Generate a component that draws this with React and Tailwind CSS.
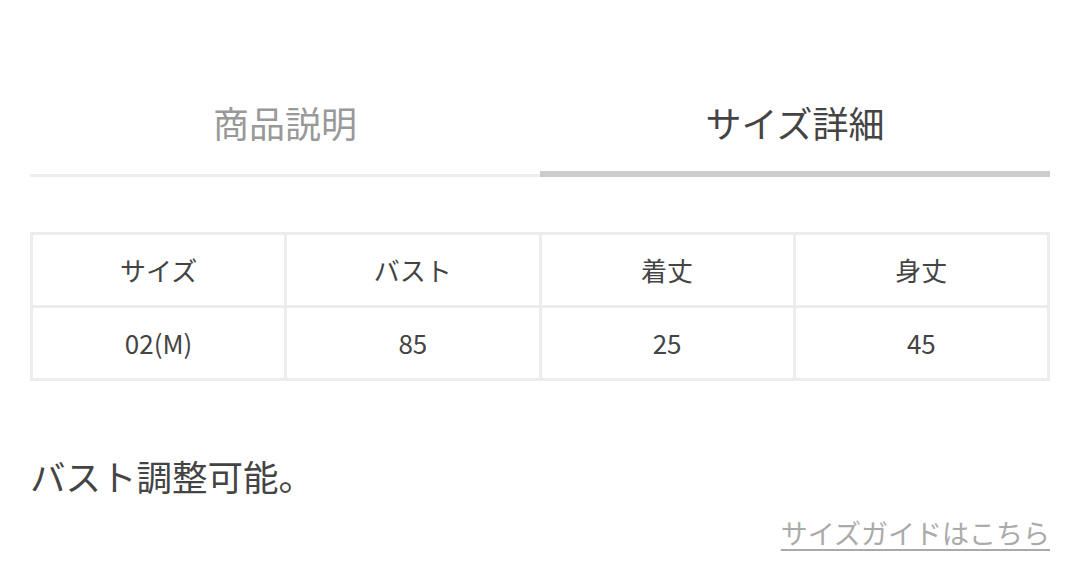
import React from 'react';

const rows = [
  ['サイズ', 'バスト', '着丈', '身丈'],
  ['02(M)', '85', '25', '45'],
];

export default function App() {
  return (
    <div
      className="w-[1080px] h-[585px] bg-white px-[30px] pt-[98px] text-[#444]"
      style={{ fontFamily: '"Noto Sans CJK JP", "Noto Sans", sans-serif' }}
    >
      {/* タブ */}
      <div className="flex">
        <div className="flex-1 flex flex-col">
          <div className="h-[48px] flex items-center justify-center text-[36px] text-[#999] leading-none">商品説明</div>
          <div className="mt-[28px] h-[3px] bg-[#eeeeee]" />
        </div>
        <div className="flex-1 flex flex-col">
          <div className="h-[48px] flex items-center justify-center text-[36px] text-[#444] leading-none">サイズ詳細</div>
          <div className="mt-[25px] h-[6px] bg-[#cccccc]" />
        </div>
      </div>

      {/* サイズ表 */}
      <table className="mt-[55px] w-full table-fixed border-collapse">
        <tbody>
          {rows.map((r, i) => (
            <tr key={i}>
              {r.map((c, j) => (
                <td
                  key={j}
                  className="h-[73px] border-[3px] border-[#ececec] text-center text-[26px] text-[#444] leading-none"
                >
                  {c}
                </td>
              ))}
            </tr>
          ))}
        </tbody>
      </table>

      <p className="mt-[77px] text-[35.5px] leading-none text-[#444]">バスト調整可能。</p>

      <div className="mt-[25px] flex justify-end">
        <a href="#" className="text-[27px] leading-none text-[#aaa] underline underline-offset-[5px] decoration-[2px]">
          サイズガイドはこちら
        </a>
      </div>
    </div>
  );
}
